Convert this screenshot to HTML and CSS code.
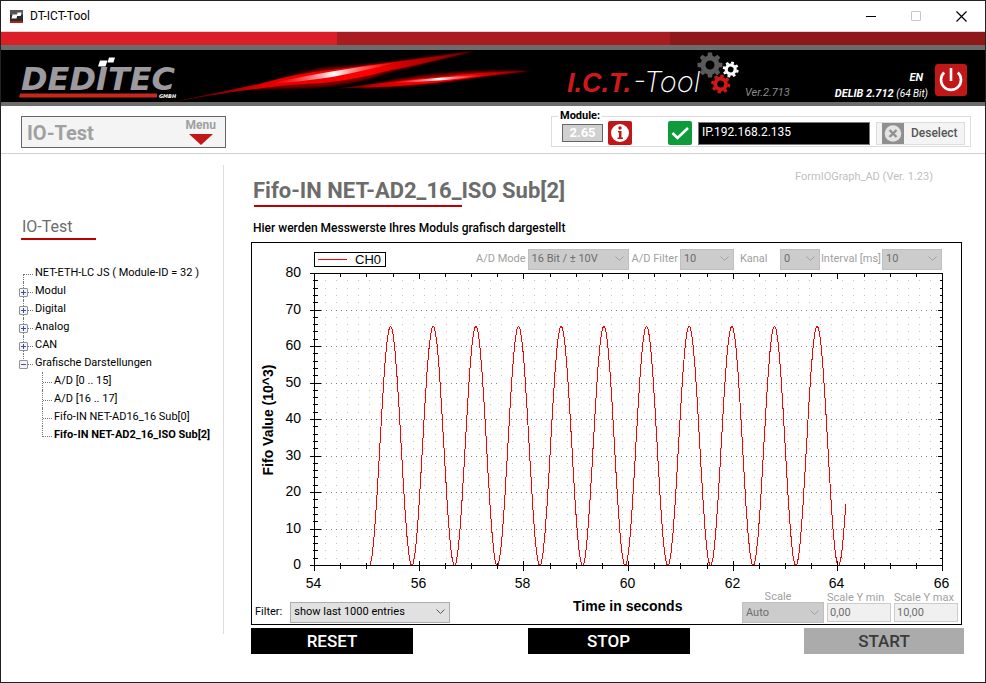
FILE: index.html
```html
<!DOCTYPE html>
<html lang="de">
<head>
<meta charset="utf-8">
<title>DT-ICT-Tool</title>
<link rel="stylesheet" href="styles.css">
</head>
<body>
<div class="window">
  <div class="titlebar">
    <svg class="app-icon" viewBox="0 0 13 13" aria-hidden="true">
      <rect width="13" height="13" rx="1" fill="#2b2b2b"/>
      <rect width="13" height="5" rx="1" fill="#555"/>
      <rect y="11" width="13" height="2" fill="#b02020"/>
      <path d="M2.500 4.500h5l-1 4h-5zM7.500 2.500h4l-.8 3.500h-4z" fill="#fff"/>
    </svg>
    <span class="window-title">DT-ICT-Tool</span>
    <div class="window-buttons">
      <button type="button" aria-label="Minimize"><svg viewBox="0 0 11 11"><path d="M0 5.500h10" stroke="#000"/></svg></button>
      <button type="button" aria-label="Maximize" disabled><svg viewBox="0 0 11 11"><path d="M.5.5h9v9h-9z" fill="none" stroke="#c8c8c8"/></svg></button>
      <button type="button" aria-label="Close"><svg viewBox="0 0 11 11"><path d="M.5.5l10 10M10.500.5l-10 10" stroke="#000" stroke-width="1.200"/></svg></button>
    </div>
  </div>

  <div class="stripe"><i></i><i></i><i></i></div>

  <header class="banner">
    <svg class="beams" viewBox="0 0 370 52" aria-hidden="true">
      <defs>
        <linearGradient id="beamRed"><stop offset="0" stop-color="#e00" stop-opacity=".25"/><stop offset=".35" stop-color="#e80000"/><stop offset=".65" stop-color="#f00"/><stop offset="1" stop-color="#a00" stop-opacity=".3"/></linearGradient>
        <linearGradient id="beamCore"><stop offset="0" stop-color="#f33" stop-opacity="0"/><stop offset=".5" stop-color="#fff"/><stop offset="1" stop-color="#f33" stop-opacity="0"/></linearGradient>
        <filter id="soft" x="-5%" y="-60%" width="110%" height="220%"><feGaussianBlur stdDeviation="1"/></filter>
        <filter id="edge" x="-5%" y="-60%" width="110%" height="220%"><feGaussianBlur stdDeviation=".5"/></filter>
      </defs>
      <g filter="url(#soft)">
        <path d="M60 40L96 32Q130 20 156 17Q190 15 216 12L300 1L256 12Q235 18 216 22Q180 36 130 38Q100 39 60 40z" fill="#a00000" opacity=".75"/>
        <path d="M185 38Q221 28 263 24Q306 20 355 21L306 27Q240 38 185 38z" fill="#b00000" opacity=".8"/>
      </g>
      <g filter="url(#edge)">
        <path d="M0 51.500L85 34Q125 23 156 20Q215 13 301 1Q250 14 213 21Q170 33 130 34Q90 36 0 52z" fill="url(#beamRed)"/>
        <path d="M162 38.500Q230 30 263 27Q310 22 360 20.500Q310 26 275 31Q230 37 162 38.500z" fill="url(#beamRed)"/>
        <path d="M95 34Q130 26 155 22Q190 16 225 12Q190 21 158 27Q125 32 95 34z" fill="url(#beamCore)"/>
        <path d="M215 33Q245 28.500 315 24.500Q270 32 215 33z" fill="url(#beamCore)"/>
      </g>
    </svg>
    <svg class="logo" viewBox="0 0 162 46" role="img" aria-label="DEDITEC GmbH">
      <text x="2" y="34" class="logo-word">DEDITEC</text>
      <path d="M81 4.500h7.500l-2 6h-7.500zM90 1.500h6l-1.500 5h-6z" fill="#fff"/>
      <path d="M1 37.500h137v4H0z" fill="#c8281c"/>
      <text x="140" y="42" class="logo-small">GMBH</text>
    </svg>
    <div class="brand"><span class="brand-ict">I.C.T.</span><span class="brand-tool">-Tool</span>
      <svg class="gears" viewBox="0 0 44 44" aria-hidden="true">
        <defs>
          <g id="gear">
            <circle r="7" fill="none" stroke="currentColor" stroke-width="5"/>
            <path id="teeth" d="M-2.600-9l.6-3.500h4l.6 3.500zM-2.600 9l.6 3.500h4l.6-3.500zM9-2.600l3.500.6v4l-3.500.6zM-9-2.600l-3.500.6v4l3.500.6z" fill="currentColor"/>
            <use href="#teeth" transform="rotate(45)"/>
          </g>
        </defs>
        <use href="#gear" transform="translate(13 13)" color="#5a5a5a"/>
        <use href="#gear" transform="translate(33.700 17.500) scale(.64) rotate(15)" color="#fff"/>
        <use href="#gear" transform="translate(23.700 32) scale(.76) rotate(10)" color="#d01818"/>
      </svg>
    </div>
    <span class="version">Ver.2.713</span>
    <div class="lib"><span class="lang">EN</span><span><b>DELIB 2.712</b> <small>(64 Bit)</small></span></div>
    <button type="button" class="power" aria-label="Power">
      <svg viewBox="0 0 32 32"><path d="M9.200 8.500a10 10 0 1 0 13.600 0M16 4v13" fill="none" stroke="#fff" stroke-width="2.600"/></svg>
    </button>
  </header>

  <div class="toolbar">
    <button type="button" class="menu">
      <span class="menu-title">IO-Test</span>
      <span class="menu-side">Menu<svg viewBox="0 0 24 11" aria-hidden="true"><path d="M0 0h24L12 11z" fill="#c01818"/></svg></span>
    </button>
    <fieldset class="module">
      <legend>Module:</legend>
      <input class="module-version" type="text" value="2.65" aria-label="Module version" disabled>
      <button type="button" class="info" aria-label="Info">
        <svg viewBox="0 0 24 24"><rect width="24" height="24" rx="2" fill="#c01818"/><circle cx="12" cy="12" r="9" fill="#fff"/><path d="M10 10h3.500v6.500h1.500v1.500h-5.500v-1.500h1.500v-5h-1z" fill="#c01818"/><circle cx="12" cy="7" r="1.700" fill="#c01818"/></svg>
      </button>
      <svg class="check" viewBox="0 0 24 24" role="img" aria-label="Connected"><rect width="24" height="24" rx="2" fill="#0f9b3c"/><path d="M4.500 12l5 5L20 7" fill="none" stroke="#fff" stroke-width="2.600"/></svg>
      <input class="address" type="text" value="IP.192.168.2.135" aria-label="Address">
      <button type="button" class="deselect">
        <svg viewBox="0 0 22 21" aria-hidden="true"><rect width="22" height="21" fill="#8f8f8f"/><circle cx="11" cy="10.500" r="8.300" fill="#e4e4e4"/><path d="M7.500 7l7 7m0-7l-7 7" stroke="#8f8f8f" stroke-width="2.400"/></svg>
        Deselect
      </button>
    </fieldset>
  </div>

  <div class="body">
    <nav class="sidebar">
      <h2>IO-Test</h2>
      <ul class="tree">
        <li class="leaf"><a href="#">NET-ETH-LC JS ( Module-ID = 32 )</a></li>
        <li><button type="button" class="toggle plus" aria-label="Expand"></button><a href="#">Modul</a></li>
        <li><button type="button" class="toggle plus" aria-label="Expand"></button><a href="#">Digital</a></li>
        <li><button type="button" class="toggle plus" aria-label="Expand"></button><a href="#">Analog</a></li>
        <li><button type="button" class="toggle plus" aria-label="Expand"></button><a href="#">CAN</a></li>
        <li><button type="button" class="toggle" aria-label="Collapse"></button><a href="#">Grafische Darstellungen</a>
          <ul>
            <li><a href="#">A/D [0 .. 15]</a></li>
            <li><a href="#">A/D [16 .. 17]</a></li>
            <li><a href="#">Fifo-IN NET-AD16_16 Sub[0]</a></li>
            <li><a href="#" class="current">Fifo-IN NET-AD2_16_ISO Sub[2]</a></li>
          </ul>
        </li>
      </ul>
    </nav>

    <main class="content">
      <div class="heading">
        <h1>Fifo-IN NET-AD2_16_ISO Sub[2]</h1>
        <span class="form-version">FormIOGraph_AD (Ver. 1.23)</span>
      </div>
      <p class="intro">Hier werden Messwerste Ihres Moduls grafisch dargestellt</p>

      <section class="panel">
        <div class="controls">
          <div class="legend"><i></i>CH0</div>
          <label for="mode">A/D Mode</label>
          <select id="mode" class="w-mode" disabled><option>16 Bit / ± 10V</option></select>
          <label for="adfilter">A/D Filter</label>
          <select id="adfilter" class="w-filter" disabled><option>10</option></select>
          <label for="kanal" class="kanal">Kanal</label>
          <select id="kanal" class="w-kanal" disabled><option>0</option></select>
          <label for="interval" class="interval">Interval [ms]</label>
          <select id="interval" class="w-interval" disabled><option>10</option></select>
        </div>
        <svg id="chart" class="chart" viewBox="0 0 709 323" role="img" aria-label="Fifo Value over time"></svg>
        <div class="bottom">
          <div class="filter">
            <label for="entries">Filter:</label>
            <select id="entries"><option>show last 1000 entries</option></select>
          </div>
          <div class="axis-title">Time in seconds</div>
          <div class="scales">
            <div class="field auto"><label for="scale">Scale</label><select id="scale" disabled><option>Auto</option></select></div>
            <div class="field"><label for="ymin">Scale Y min</label><input id="ymin" type="text" value="0,00" disabled></div>
            <div class="field"><label for="ymax">Scale Y max</label><input id="ymax" type="text" value="10,00" disabled></div>
          </div>
        </div>
      </section>

      <div class="actions">
        <button type="button">RESET</button>
        <button type="button">STOP</button>
        <button type="button" disabled>START</button>
      </div>
    </main>
  </div>
</div>
<script src="chart.js"></script>
</body>
</html>
```
FILE: styles.css
```css
* { box-sizing: border-box; }

body {
  margin: 0;
  background: #fff;
  font: 11px/18px Roboto, "Liberation Sans", sans-serif;
  color: #000;
}

button, input, select { font: inherit; color: inherit; margin: 0; padding: 0; border: 0; border-radius: 0; }
h1, h2, p, ul { margin: 0; padding: 0; font-weight: 400; list-style: none; }
a { color: inherit; text-decoration: none; }
svg { display: block; }

.window {
  display: flex;
  flex-direction: column;
  min-height: 100vh;
  border: 1px solid #222;
}

/* title bar */
.titlebar { display: flex; align-items: center; height: 30px; padding: 0 18px 0 9px; }
.app-icon { width: 13px; height: 13px; }
.window-title { margin-left: 7px; font-size: 12px; }
.window-buttons { display: flex; gap: 34px; margin-left: auto; }
.window-buttons button { width: 11px; height: 11px; background: none; }

/* banner */
.stripe { display: grid; grid-template-columns: 336fr 333fr 315fr; height: 14px; border-top: 1px solid #d8d8d8; }
.stripe i:nth-child(1) { background: #dc1f26; }
.stripe i:nth-child(2) { background: #a91d21; }
.stripe i:nth-child(3) { background: #8f181b; }

.banner {
  position: relative;
  display: grid;
  grid-template-columns: 548px 178px 1fr auto 32px;
  height: 61px;
  padding: 0 18px;
  background: #000;
  border: solid #6c6c6c;
  border-width: 5px 0 4px;
  font-style: italic;
}
.beams { position: absolute; left: 173px; top: 0; width: 370px; height: 52px; }
.logo { position: relative; width: 162px; height: 46px; margin-top: 6px; overflow: visible; }
.logo-word { font: italic 700 32px "DejaVu Sans", sans-serif; fill: #9c9a9e; }
.logo-small { font: italic 700 5px "DejaVu Sans", sans-serif; fill: #fff; }
.brand { position: relative; align-self: end; white-space: nowrap; line-height: 26px; }
.brand-ict { margin-right: 2px; font: italic 700 27px/26px "Liberation Sans", sans-serif; color: #d01818; }
.brand-tool { font: italic 200 29px/26px Inter, sans-serif; color: #fff; }
.gears { position: absolute; left: 130px; top: -17px; width: 44px; height: 44px; }
.version { align-self: end; font-size: 11px; color: #8c8c8c; }
.lib { display: flex; flex-direction: column; align-self: end; align-items: flex-end; margin-right: 7px; line-height: 16px; color: #fff; }
.lang { margin-right: 5px; font-weight: 700; }
.lib small { font-size: 10px; }
.power { align-self: center; width: 32px; height: 32px; border-radius: 3px; background: #c01818; margin-top: 8px; }

/* toolbar */
.toolbar {
  display: flex;
  justify-content: space-between;
  align-items: flex-start;
  height: 48px;
  padding: 3px 14px 0 20px;
  border-bottom: 1px solid #d0d0d0;
}
.menu {
  display: flex;
  justify-content: space-between;
  width: 205px;
  height: 32px;
  margin-top: 7px;
  padding: 0 9px 0 5px;
  background: #f4f4f4;
  border: 1px solid #666;
  color: #a0a0a0;
}
.menu-title { font-size: 20px; font-weight: 700; line-height: 32px; }
.menu-side { font-size: 12px; font-weight: 700; line-height: 17px; }
.menu-side svg { width: 24px; height: 11px; margin: 0 auto; }

.module {
  display: flex;
  align-items: center;
  width: 420px;
  height: 38px;
  margin: 0;
  padding: 0 5px 3px 10px;
  border: 1px solid #dcdcdc;
}
.module legend { margin-left: -4px; padding: 0 2px; font-size: 11px; font-weight: 700; line-height: 14px; }
.module-version { width: 41px; height: 18px; background: #d0d0d0; border: 1px solid #666; color: #fff; font-size: 13px; font-weight: 700; text-align: center; }
.info { width: 24px; height: 24px; margin-left: 5px; background: none; }
.check { width: 24px; height: 24px; margin-left: 36px; }
.address { width: 172px; height: 23px; margin: 0 6px; padding: 0 3px 2px; background: #000; border: 1px solid #777; color: #fff; font-size: 12px; }
.deselect { display: flex; align-items: center; gap: 7px; width: 89px; height: 23px; padding-left: 5px; background: #f4f4f4; border: 1px solid #dcdcdc; color: #555; font-size: 12px; font-weight: 500; }
.deselect svg { width: 22px; height: 21px; }

/* body */
.body { display: flex; flex: 1; padding: 11px 0 0 20px; }
.sidebar { width: 203px; height: 469px; padding-top: 52px; border-right: 1px solid #dcdcdc; }
.sidebar h2 { width: 75px; height: 23px; padding-left: 1px; border-bottom: 2px solid #c00000; font-size: 16px; line-height: 20px; color: #6c6c6c; }
.tree { margin-top: 24px; }
.tree li { position: relative; padding-left: 14px; }
.tree > li::before {
  content: "";
  position: absolute;
  left: 2px;
  top: 0;
  bottom: 0;
  width: 9px;
  border-left: 1px dotted #777;
  background: linear-gradient(90deg, #777 50%, transparent 50%) 0 10px / 2px 1px repeat-x;
}
.tree > li:first-child::before { top: 10px; background-position: 0 0; }
.tree > li:last-child::before { bottom: auto; height: 11px; }
.toggle {
  position: absolute;
  left: -2px;
  top: 6px;
  width: 9px;
  height: 9px;
  border: 1px solid #919191;
  border-radius: 1px;
  background: linear-gradient(#3a4fa0, #3a4fa0) center / 5px 1px no-repeat, #f4f4f4;
}
.toggle.plus { background: linear-gradient(#3a4fa0, #3a4fa0) center / 5px 1px no-repeat, linear-gradient(#3a4fa0, #3a4fa0) center / 1px 5px no-repeat, #f4f4f4; }
.tree ul { margin-left: 7px; }
.tree ul li { padding-left: 12px; }
.tree ul li::before {
  content: "";
  position: absolute;
  left: 0;
  top: 0;
  width: 9px;
  height: 18px;
  border-left: 1px dotted #777;
  background: linear-gradient(90deg, #777 50%, transparent 50%) 0 10px / 2px 1px repeat-x;
}
.tree ul li:last-child::before { height: 11px; }
.current { font-weight: 700; }
.tree a { white-space: nowrap; }

.content { flex: 1; padding: 0 21px 0 27px; }
.heading { display: flex; justify-content: space-between; align-items: flex-start; padding: 3px 31px 0 2px; }
.heading h1 { height: 39px; padding-top: 9px; font-size: 22px; font-weight: 700; line-height: 28px; color: #6c6c6c; background: linear-gradient(#c00000, #c00000) 1px 100% / 208px 2px no-repeat; }
.form-version { font-size: 11px; color: #c0c0c0; }
.intro { height: 35px; padding: 13px 2px 0; font-size: 12px; font-weight: 500; line-height: 16px; }

.panel { margin-right: 2px; border: 1px solid #000; background: #fff; color: #a0a0a0; }
.controls { display: flex; align-items: center; height: 27px; padding: 5px 19px 0 62px; }
.legend { display: flex; align-items: center; gap: 8px; width: 72px; height: 15px; margin-right: auto; padding-left: 3px; border: 1px solid #000; color: #000; font: 13px/13px "Liberation Sans", sans-serif; }
.legend i { width: 29px; height: 1px; background: #f00; }
select {
  appearance: none;
  height: 21px;
  padding: 0 3px;
  border: 1px solid #adadad;
  background: #e1e1e1 url("data:image/svg+xml,%3Csvg xmlns='http://www.w3.org/2000/svg' width='9' height='6'%3E%3Cpath d='M.5.5l4 4 4-4' fill='none' stroke='%23555'/%3E%3C/svg%3E") right 4px center no-repeat;
}
select:disabled {
  border-color: #bfbfbf;
  background-color: #ccc;
  background-image: url("data:image/svg+xml,%3Csvg xmlns='http://www.w3.org/2000/svg' width='9' height='6'%3E%3Cpath d='M.5.5l4 4 4-4' fill='none' stroke='%23a0a0a0'/%3E%3C/svg%3E");
  color: #6d6d6d;
  opacity: 1;
}
.controls label { margin: 0 2px 0 3px; }
.controls .kanal { width: 40px; margin: 0 0 0 6px; }
.controls .interval { margin: 0 1px; }
.w-mode { width: 101px; }
.w-filter { width: 54px; }
.w-kanal { width: 40px; }
.w-interval { width: 60px; }

.chart { width: 100%; height: auto; overflow: visible; font: 14px "Liberation Sans", sans-serif; }
.chart .title { font-weight: 700; }
.chart path { fill: none; stroke: #000; shape-rendering: crispEdges; }
.chart .minor { stroke: #c4c4c4; stroke-dasharray: 1 10; }
.chart .major { stroke: #808080; stroke-dasharray: 1 4; }
.chart .curve { stroke: #f00; }

.bottom { display: grid; grid-template-columns: 318px 1fr auto; height: 31px; padding: 0 3px; }
.filter { display: flex; align-items: center; gap: 8px; padding-top: 7px; color: #000; }
.filter select { width: 160px; }
.axis-title { padding-top: 4px; color: #000; font: 700 14px/18px "Liberation Sans", sans-serif; }
.scales { display: flex; gap: 3px; }
.field { display: flex; flex-direction: column; width: 64px; line-height: 10px; }
.field.auto { width: 82px; }
.field label { white-space: nowrap; }
.field.auto label { margin-top: -1px; padding-right: 10px; text-align: center; }
.field input { height: 19px; padding: 0 2px; border: 1px solid #ccc; background: #f0f0f0; color: #6d6d6d; }

.actions { display: flex; justify-content: space-between; align-items: center; margin-top: 3px; }
.actions button { width: 162px; height: 26px; background: #000; color: #fff; font-size: 17px; font-weight: 500; line-height: 26px; }
.actions button:disabled { width: 160px; background: #ababab; color: #3a3a3a; }
```
FILE: chart.js
```js
// Plot area inside the chart drawing.
const plot = { left: 62.5, right: 690.5, top: 3.5, bottom: 295.5 };
const axisX = { min: 54, max: 66, step: 2, minor: 0.5 };
const axisY = { min: 0, max: 80, step: 10, minor: 2 };

const px = v => plot.left + (v - axisX.min) / (axisX.max - axisX.min) * (plot.right - plot.left);
const py = v => plot.bottom - (v - axisY.min) / (axisY.max - axisY.min) * (plot.bottom - plot.top);
const snap = v => Math.floor(v) + 0.5;

const parts = [];
const path = (d, cls) => parts.push(`<path class="${cls}" d="${d}"/>`);
const label = (x, y, anchor, text) => parts.push(`<text x="${x}" y="${y}" text-anchor="${anchor}">${text}</text>`);

let minor = "", major = "", ticks = "";
for (let v = axisY.min; v <= axisY.max; v += axisY.minor) {
  const y = snap(py(v));
  const isMajor = v % axisY.step === 0;
  if (v > axisY.min && v < axisY.max) {
    if (isMajor) major += `M${plot.left + 6} ${y}H${plot.right - 5}`;
    else minor += `M${plot.left + 10.5} ${y}H${plot.right}`;
  }
  const out = isMajor ? 5 : 2;
  ticks += `M${plot.left - out} ${y}h${out * 2 + 1}M${plot.right} ${y}h${-(isMajor ? 5 : 3)}`;
  if (isMajor) label(49, y + 3.5, "end", v);
}
for (let v = axisX.min; v <= axisX.max; v += axisX.minor) {
  const x = snap(px(v));
  const isMajor = v % axisX.step === 0;
  const out = isMajor ? 5 : 3;
  ticks += `M${x} ${plot.bottom - out}v${out * 2}M${x} ${plot.top}v${out}`;
  if (isMajor) label(x - 1, 318, "middle", v);
}
path(minor, "minor");
path(major, "major");

const amplitude = 32.75, period = 0.8152, peak = 55.453;
let curve = "";
for (let t = 55.06; t <= 64.15; t += 0.01) {
  const v = amplitude + amplitude * Math.cos((t - peak) / period * 2 * Math.PI);
  curve += `${curve ? "L" : "M"}${px(t).toFixed(1)} ${py(v).toFixed(1)}`;
}
path(curve, "curve");
path(ticks + `M${plot.left} ${plot.top}H${plot.right}V${plot.bottom}H${plot.left}z`, "axis");
parts.push(`<text class="title" text-anchor="middle" transform="translate(21 150) rotate(-90)">Fifo Value (10^3)</text>`);

document.getElementById("chart").innerHTML = parts.join("");
```
